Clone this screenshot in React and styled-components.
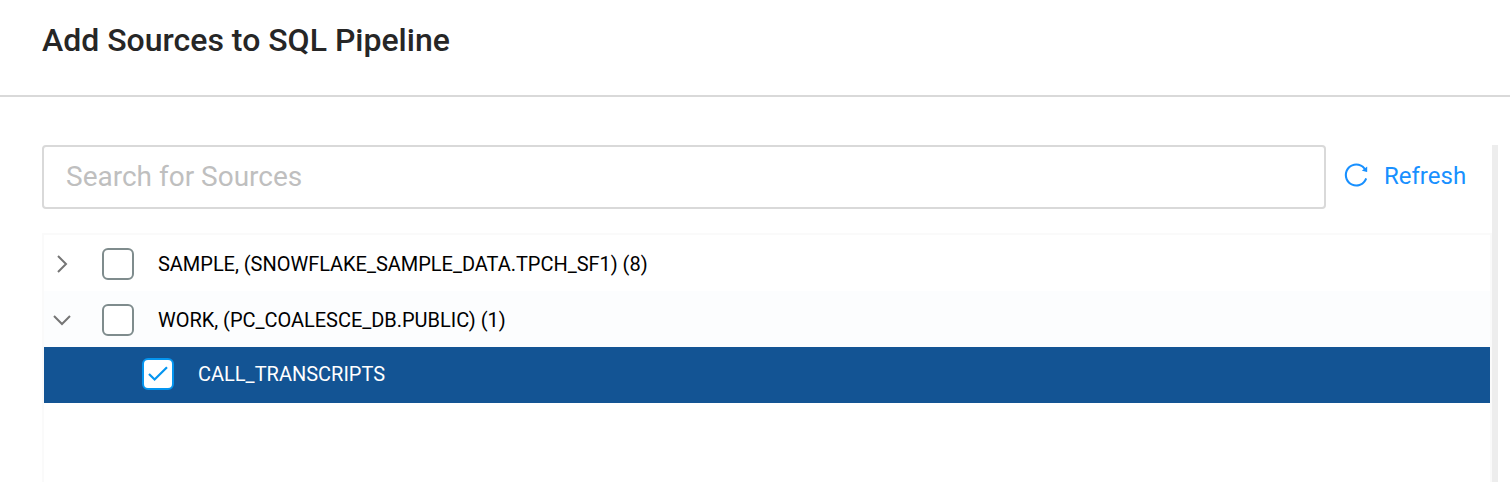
import React from "react";
import styled, { createGlobalStyle } from "styled-components";
import { AiOutlineReload } from "react-icons/ai";

const GlobalStyle = createGlobalStyle`
  * { box-sizing: border-box; }
  body {
    margin: 0;
    background: #fff;
    font-family: Roboto, "Liberation Sans", sans-serif;
    overflow: hidden;
  }
`;

const Dialog = styled.main`
  display: flex;
  flex-direction: column;
  height: 482px;
`;

const Header = styled.header`
  height: 97px;
  padding: 20px 42px 0;
  border-bottom: 2px solid #d9d9d9;
`;

const Title = styled.h1`
  margin: 0;
  font-size: 32px;
  font-weight: 500;
  line-height: 40px;
  color: #262626;
`;

const ScrollArea = styled.section`
  flex: 1;
  display: flex;
  margin: 48px 12px 0 42px;
  min-height: 0;
`;

const Content = styled.div`
  flex: 1;
  display: flex;
  flex-direction: column;
`;

const ScrollTrack = styled.div`
  width: 6px;
  background: #ededed;
`;

const Toolbar = styled.div`
  display: flex;
  align-items: center;
  height: 64px;
`;

const SearchInput = styled.input`
  width: 1284px;
  height: 64px;
  padding: 0 22px 2px;
  border: 2px solid #d9d9d9;
  border-radius: 4px;
  outline: none;
  font: 400 28px Roboto, sans-serif;
  &::placeholder { color: #bfbfbf; opacity: 1; }
`;

const RefreshButton = styled.button`
  display: flex;
  align-items: center;
  gap: 14px;
  margin-left: 16px;
  padding: 0 0 4px;
  border: 0;
  background: none;
  color: #1890ff;
  font: 400 24px/28px Roboto, sans-serif;
  white-space: nowrap;
`;

const RefreshLabel = styled.span`
  padding-top: 2px;
`;

const Tree = styled.div`
  flex: 1;
  margin-top: 24px;
  border: 2px solid #fafafa;
  border-bottom: 0;
`;

const Row = styled.div`
  display: flex;
  align-items: center;
  height: 56px;
  padding-top: ${(p) => (p.$selected ? 0 : 2)}px;
  padding-bottom: ${(p) => (p.$selected ? 2 : 0)}px;
  padding-left: ${(p) => (p.$selected ? 98 : 8)}px;
  background: ${(p) => (p.$selected ? "#135494" : p.$shaded ? "#fcfdfe" : "#fff")};
  color: ${(p) => (p.$selected ? "#fff" : "#000")};
`;

const Chevron = styled.svg`
  width: 20px;
  height: 20px;
  margin-right: 30px;
  fill: none;
  stroke: #757575;
  stroke-width: 2;
`;

const Checkbox = styled.span`
  display: flex;
  width: 32px;
  height: 32px;
  border: 2px solid ${(p) => (p.$checked ? "#0495f0" : "#7f8c8d")};
  border-radius: 6px;
  background: #fff;
  svg { width: 28px; height: 28px; fill: none; stroke: #0495f0; stroke-width: 2.2; }
`;

const Label = styled.span`
  margin-left: 24px;
  font-size: 20px;
  line-height: 28px;
  letter-spacing: ${(p) => (p.$selected ? 0 : "-0.03px")};
`;

function SourceRow({ label, open, shaded, selected }) {
  return (
    <Row $shaded={shaded} $selected={selected}>
      {!selected && (
        <Chevron viewBox="0 0 20 20">
          <path d={open ? "M2 6 10 14 18 6" : "M6 2 14 10 6 18"} />
        </Chevron>
      )}
      <Checkbox $checked={selected}>
        {selected && (
          <svg viewBox="0 0 28 28">
            <path d="M5 14 10.6 19.5 23 7.2" />
          </svg>
        )}
      </Checkbox>
      <Label $selected={selected}>{label}</Label>
    </Row>
  );
}

export default function App() {
  return (
    <Dialog>
      <GlobalStyle />
      <Header>
        <Title>Add Sources to SQL Pipeline</Title>
      </Header>
      <ScrollArea>
        <Content>
          <Toolbar>
            <SearchInput placeholder="Search for Sources" />
            <RefreshButton>
              <AiOutlineReload size={28} />
              <RefreshLabel>Refresh</RefreshLabel>
            </RefreshButton>
          </Toolbar>
          <Tree>
            <SourceRow label="SAMPLE, (SNOWFLAKE_SAMPLE_DATA.TPCH_SF1) (8)" />
            <SourceRow label="WORK, (PC_COALESCE_DB.PUBLIC) (1)" open shaded />
            <SourceRow label="CALL_TRANSCRIPTS" selected />
          </Tree>
        </Content>
        <ScrollTrack />
      </ScrollArea>
    </Dialog>
  );
}
